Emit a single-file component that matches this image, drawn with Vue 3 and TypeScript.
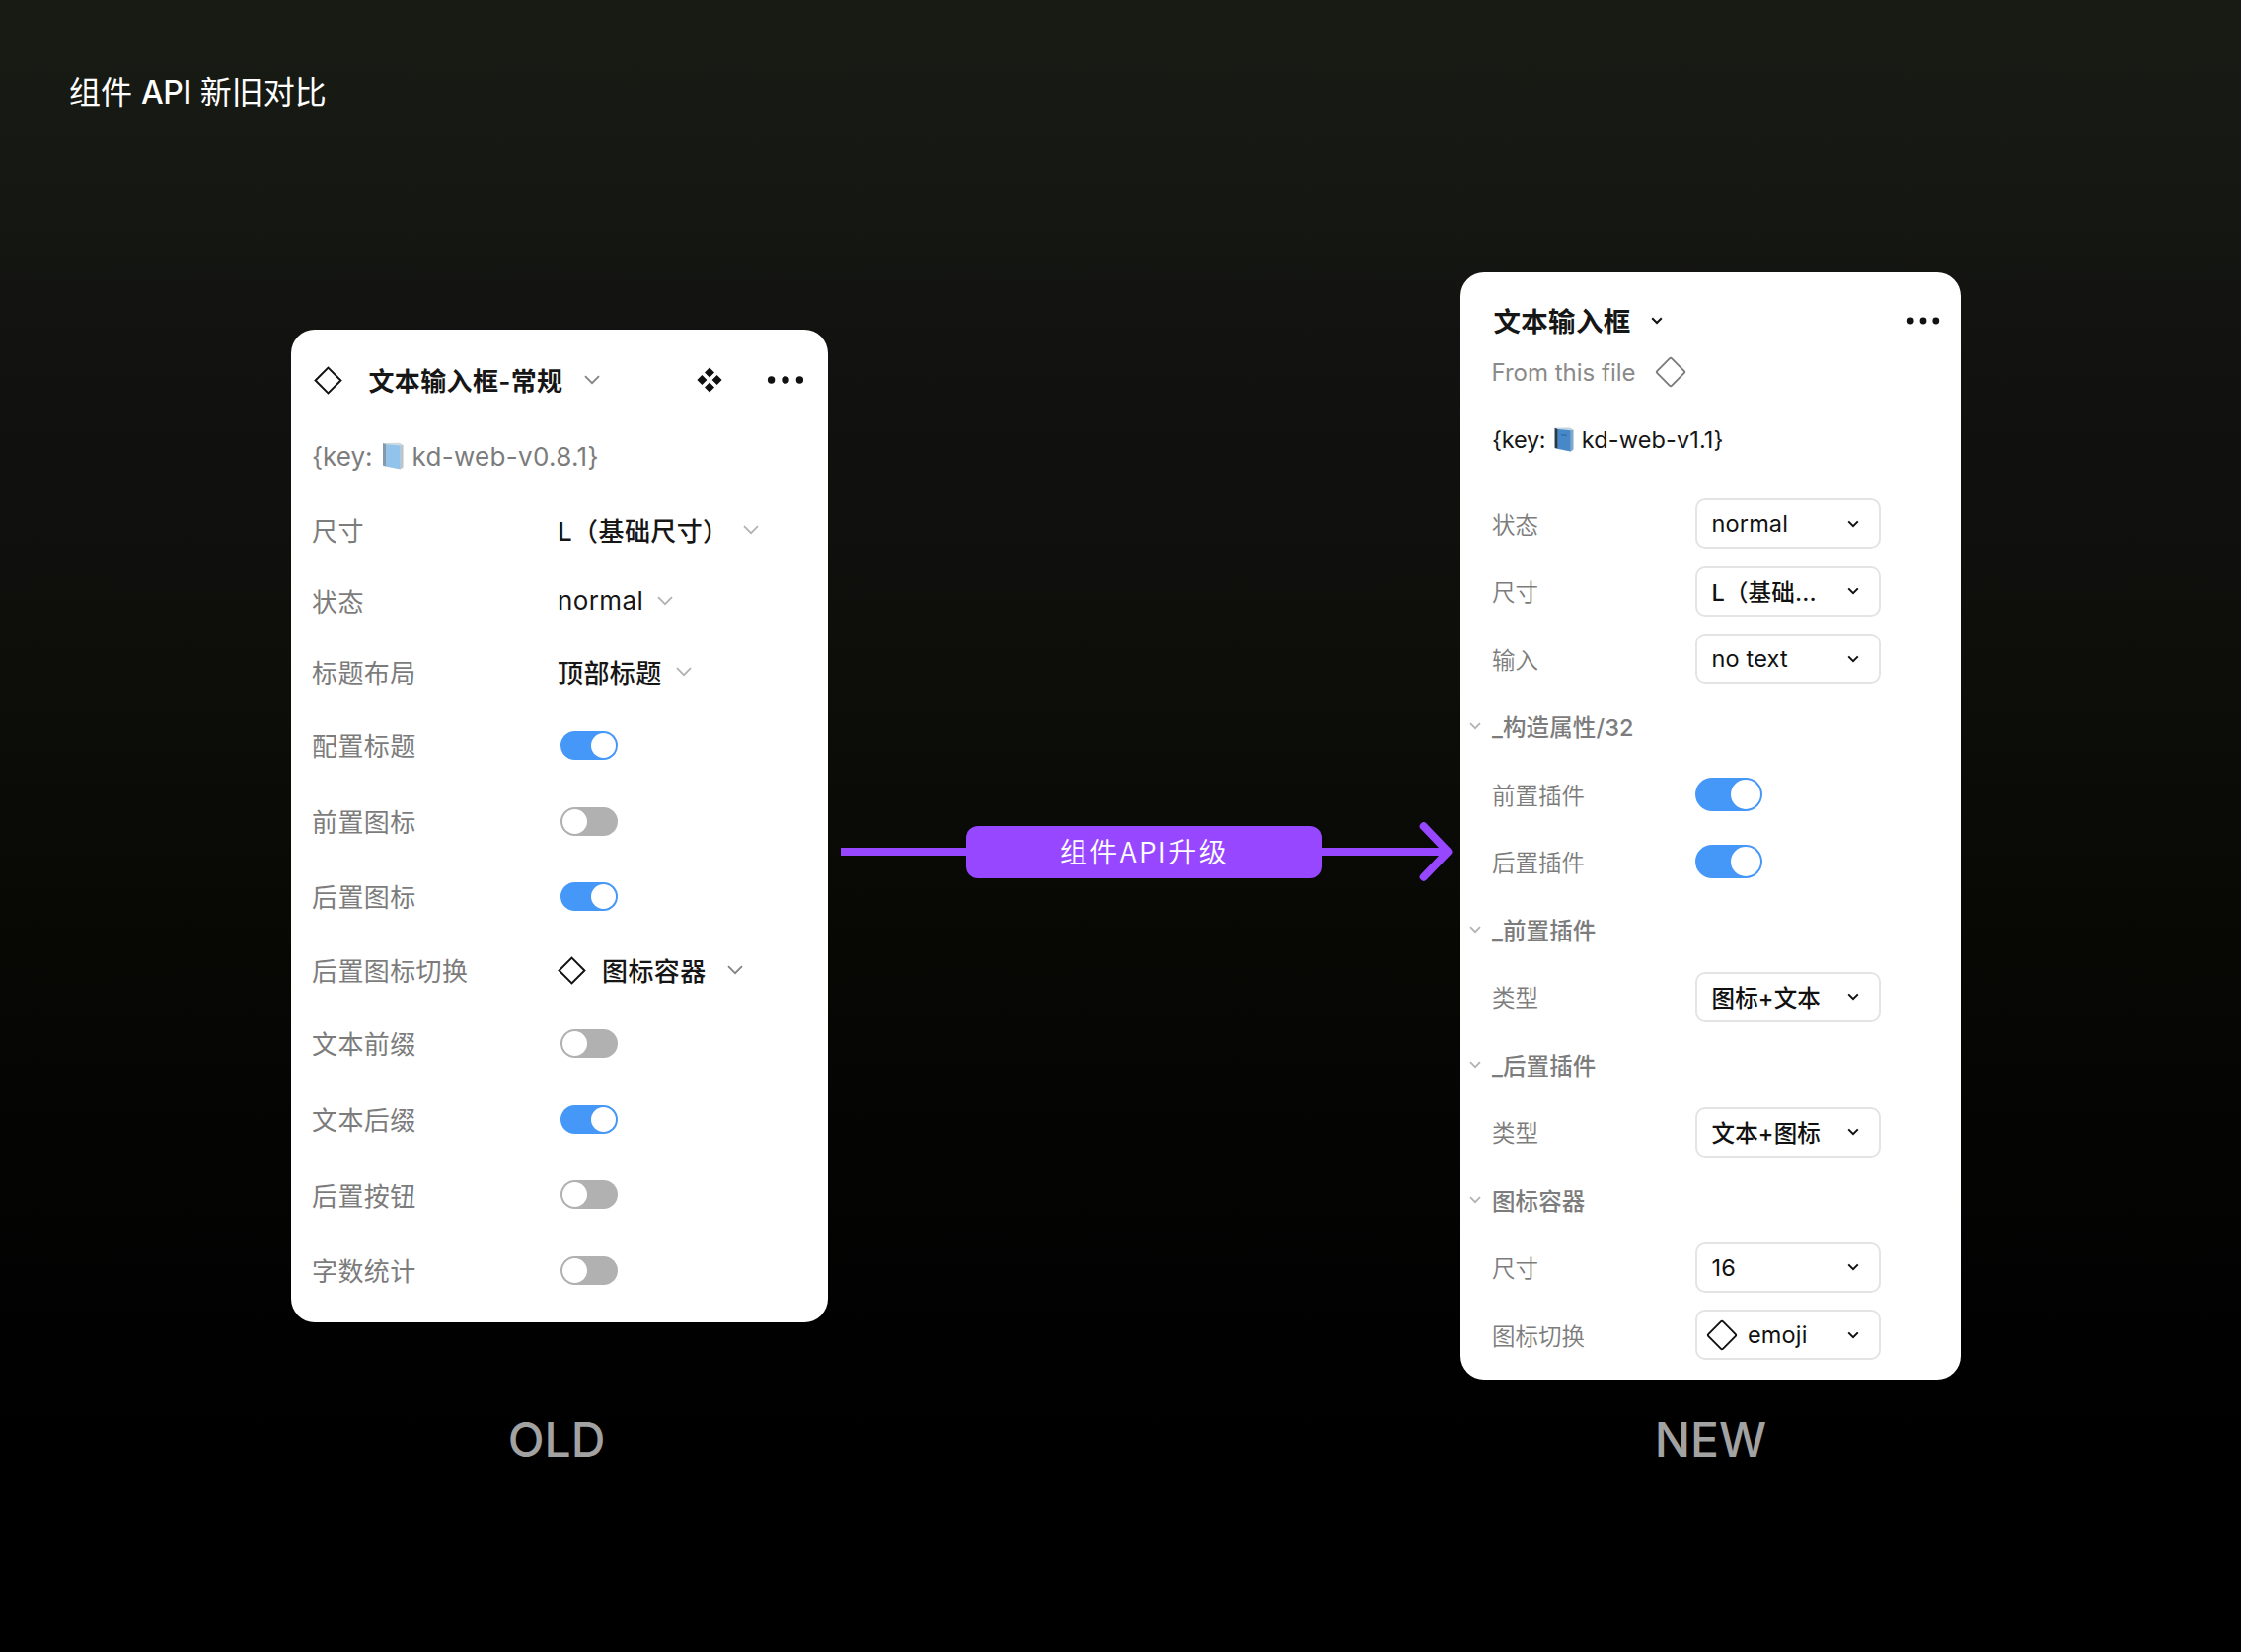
<script setup lang="ts">
type OldRow = {
  label: string
  kind: 'select' | 'switch' | 'icon'
  value?: string
  on?: boolean
}

type NewRow = {
  label: string
  kind: 'select' | 'switch' | 'icon' | 'group'
  value?: string
  on?: boolean
}

const oldRows: OldRow[] = [
  { label: '尺寸', kind: 'select', value: 'L（基础尺寸）' },
  { label: '状态', kind: 'select', value: 'normal' },
  { label: '标题布局', kind: 'select', value: '顶部标题' },
  { label: '配置标题', kind: 'switch', on: true },
  { label: '前置图标', kind: 'switch', on: false },
  { label: '后置图标', kind: 'switch', on: true },
  { label: '后置图标切换', kind: 'icon', value: '图标容器' },
  { label: '文本前缀', kind: 'switch', on: false },
  { label: '文本后缀', kind: 'switch', on: true },
  { label: '后置按钮', kind: 'switch', on: false },
  { label: '字数统计', kind: 'switch', on: false },
]

const newRows: NewRow[] = [
  { label: '状态', kind: 'select', value: 'normal' },
  { label: '尺寸', kind: 'select', value: 'L（基础...' },
  { label: '输入', kind: 'select', value: 'no text' },
  { label: '_构造属性/32', kind: 'group' },
  { label: '前置插件', kind: 'switch', on: true },
  { label: '后置插件', kind: 'switch', on: true },
  { label: '_前置插件', kind: 'group' },
  { label: '类型', kind: 'select', value: '图标+文本' },
  { label: '_后置插件', kind: 'group' },
  { label: '类型', kind: 'select', value: '文本+图标' },
  { label: '图标容器', kind: 'group' },
  { label: '尺寸', kind: 'select', value: '16' },
  { label: '图标切换', kind: 'icon', value: 'emoji' },
]

// Chinese values are set in a medium weight, Latin ones in regular
const isHan = (text = '') => /[\u4e00-\u9fff]/.test(text)
</script>

<template>
  <div class="board">
    <h1 class="title">组件 <span class="latin">API</span> 新旧对比</h1>

    <main class="compare">
      <section class="card old">
        <header class="old-head">
          <svg class="diamond" viewBox="0 0 29 29" width="29" height="29">
            <path d="M14.5 1.6 27.4 14.5 14.5 27.4 1.6 14.5Z" />
          </svg>
          <strong class="old-name">文本输入框-常规</strong>
          <svg class="chev dark" viewBox="0 0 16 10" width="16" height="10"><path d="M1 1.2 8 8.2 15 1.2" /></svg>
          <span class="grow"></span>
          <svg class="component" viewBox="0 0 26 26" width="26" height="26">
            <path d="M13 .4 18 5.4 13 10.4 8 5.4ZM13 15.6 18 20.6 13 25.6 8 20.6ZM5.4 8 10.4 13 5.4 18 .4 13ZM20.6 8 25.6 13 20.6 18 15.6 13Z" />
          </svg>
          <svg class="dots" viewBox="0 0 38 8" width="38" height="8">
            <circle cx="4.6" cy="4" r="3.7" /><circle cx="19" cy="4" r="3.7" /><circle cx="33.4" cy="4" r="3.7" />
          </svg>
        </header>
        <p class="key">
          <span class="brace">{key:</span>
          <svg class="book" viewBox="0 0 22 28" width="22" height="28">
            <path d="M1 1 18 .8 21.4 3V25.6L18.4 27.4 1 24Z" fill="#cfd9e0" />
            <path d="M4 2.2 18.6 3.4V27.2L4 24.4Z" fill="#92c3ea" />
            <path d="M1 1 4 2.2V24.4L1 23.4Z" fill="#8699a8" />
            <path d="M18.6 3.4 21.4 2.8V25.6L18.6 27.2Z" fill="#bac6ce" />
          </svg>
          <span>kd-web-v0.8.1}</span>
        </p>
        <div v-for="row in oldRows" :key="row.label" class="old-row" :class="`row-${row.kind}`">
          <span class="label">{{ row.label }}</span>
          <span v-if="row.kind === 'switch'" class="switch" :class="{ on: row.on }"><i></i></span>
          <template v-else>
            <svg v-if="row.kind === 'icon'" class="diamond" viewBox="0 0 29 29" width="29" height="29">
              <path d="M14.5 1.6 27.4 14.5 14.5 27.4 1.6 14.5Z" />
            </svg>
            <span class="value" :class="{ han: isHan(row.value) }">{{ row.value }}</span>
            <svg class="chev" :class="{ dark: row.kind === 'icon' }" viewBox="0 0 16 10" width="16" height="10">
              <path d="M1 1.2 8 8.2 15 1.2" />
            </svg>
          </template>
        </div>
      </section>

      <div class="upgrade">
        <span class="line start"></span>
        <span class="pill">组件API升级</span>
        <span class="line end"></span>
        <svg class="head" viewBox="0 0 34 60" width="34" height="60"><path d="M4.7 4.3 29.4 30 4.7 55.7" /></svg>
      </div>

      <section class="card new">
        <header class="new-head">
          <strong class="new-name">文本输入框</strong>
          <svg class="chev black" viewBox="0 0 12 8" width="12" height="8"><path d="M1.2 1.2 6 6 10.8 1.2" /></svg>
          <span class="grow"></span>
          <svg class="dots" viewBox="0 0 34 8" width="34" height="8">
            <circle cx="4.2" cy="4" r="3.4" /><circle cx="17" cy="4" r="3.4" /><circle cx="29.8" cy="4" r="3.4" />
          </svg>
        </header>
        <p class="from">
          <span>From this file</span>
          <svg class="soft" viewBox="0 0 32 32" width="32" height="32">
            <path d="M14.8 2.4Q16 1.2 17.2 2.4L29.6 14.8Q30.8 16 29.6 17.2L17.2 29.6Q16 30.8 14.8 29.6L2.4 17.2Q1.2 16 2.4 14.8Z" />
          </svg>
        </p>
        <p class="key">
          <span class="brace">{key:</span>
          <svg class="book" viewBox="0 0 20 25" width="20" height="25">
            <path d="M.6 .8 16 .6 19.4 2.8V22.6L16.6 24.6 .6 21.4Z" fill="#c3d3df" />
            <path d="M3.6 2 16.8 3.2V24.4L3.6 21.8Z" fill="#4788c8" />
            <path d="M.6 .8 3.6 2V21.8L.6 20.8Z" fill="#263a4d" />
            <path d="M16.8 3.2 19.4 2.6V22.6L16.8 24.4Z" fill="#80a9cd" />
            <path d="M7 7 12.8 7.6V9.2L7 8.6Z" fill="#356fae" />
          </svg>
          <span>kd-web-v1.1}</span>
        </p>
        <div v-for="(row, i) in newRows" :key="i" class="new-row">
          <template v-if="row.kind === 'group'">
            <svg class="chev group-chev" viewBox="0 0 12 8" width="12" height="8"><path d="M1 1.2 6 6.2 11 1.2" /></svg>
            <span class="group-name">{{ row.label }}</span>
          </template>
          <template v-else>
            <span class="label">{{ row.label }}</span>
            <span v-if="row.kind === 'switch'" class="switch" :class="{ on: row.on }"><i></i></span>
            <span v-else class="select" :class="{ 'with-icon': row.kind === 'icon' }">
              <svg v-if="row.kind === 'icon'" class="soft" viewBox="0 0 32 32" width="32" height="32">
                <path d="M14.8 2.4Q16 1.2 17.2 2.4L29.6 14.8Q30.8 16 29.6 17.2L17.2 29.6Q16 30.8 14.8 29.6L2.4 17.2Q1.2 16 2.4 14.8Z" />
              </svg>
              <span class="value" :class="{ han: isHan(row.value) }">{{ row.value }}</span>
              <svg class="chev black" viewBox="0 0 12 8" width="12" height="8"><path d="M1.2 1.4 6 6.2 10.8 1.4" /></svg>
            </span>
          </template>
        </div>
      </section>
    </main>

    <footer class="captions">
      <span class="caption cap-old">OLD</span>
      <span class="caption cap-new">NEW</span>
    </footer>
  </div>
</template>

<style>
body {
  background: #000;
}
</style>

<style scoped>
.board {
  box-sizing: border-box;
  width: 2271px;
  height: 1674px;
  overflow: hidden;
  display: flex;
  flex-direction: column;
  background: linear-gradient(#181a14 0, #161813 180px, #121310 340px, #0e0e0b 640px, #070704 970px, #020202 1310px, #000 1450px);
  font-family: Inter, 'Noto Sans CJK SC', sans-serif;
  color: #161616;
}
.title {
  margin: 70px 0 0 70px;
  height: 48px;
  line-height: 48px;
  font-size: 32px;
  font-weight: 400;
  color: #fff;
}
.latin {
  font-weight: 500;
  letter-spacing: -0.4px;
}
.compare {
  display: flex;
  align-items: flex-start;
  margin: 158px 0 0 295px;
  height: 1122px;
}
.card {
  box-sizing: border-box;
  background: #fff;
  border-radius: 24px;
  white-space: nowrap;
}
svg {
  display: block;
  flex: none;
  fill: none;
}
p {
  margin: 0;
}
.grow {
  flex: 1;
}
.label {
  flex: none;
  color: #7c7c7c;
}
.value.han {
  font-weight: 500;
}
.chev {
  stroke: #b3b3b3;
  stroke-width: 1.8;
}
.chev.dark {
  stroke: #838383;
}
.chev.black {
  stroke: #111;
  stroke-width: 2;
}
.dots,
.component {
  fill: #111;
}
.diamond {
  stroke: #111;
  stroke-width: 2;
}
.soft {
  stroke: #111;
  stroke-width: 1.9;
}
.switch {
  box-sizing: border-box;
  display: flex;
  flex: none;
  padding: 2px;
  background: #b1b1b1;
  border-radius: 99px;
}
.switch i {
  height: 100%;
  aspect-ratio: 1;
  border-radius: 50%;
  background: #fff;
}
.switch.on {
  justify-content: flex-end;
  background: #4597f8;
}

.old {
  width: 544px;
  height: 1006px;
  margin-top: 58px;
  padding-top: 13px;
  font-size: 26px;
  letter-spacing: 0.4px;
}
.old-head {
  display: flex;
  align-items: center;
  height: 76px;
  padding: 0 24px 0 23px;
}
.old-name {
  margin: 0 22px 0 26.5px;
  padding-bottom: 2px;
  font-weight: 600;
  letter-spacing: 0.35px;
}
.old-head .dots {
  margin-left: 45px;
}
.old .key {
  display: flex;
  align-items: center;
  height: 78px;
  padding-left: 21px;
  letter-spacing: 0.3px;
  color: #7c7c7c;
}
.old .brace {
  letter-spacing: 0;
}
.old .book {
  margin: 0 9px;
}
.old-row {
  display: flex;
  align-items: center;
  height: 72px;
  padding-left: 21px;
}
.row-switch {
  height: 76.7px;
}
.old-row .label {
  width: 249px;
  padding-bottom: 1.5px;
}
.old-row .value {
  padding-bottom: 1px;
}
.old-row .chev {
  margin-left: 14px;
}
.row-icon .chev {
  margin-left: 21px;
}
.old-row .diamond {
  margin-right: 16px;
}
.old-row .switch {
  width: 58px;
  height: 29px;
  margin-left: 3px;
}

.upgrade {
  display: flex;
  align-items: center;
  width: 620px;
  height: 60px;
  margin: 557px 8px 0 13px;
}
.line {
  height: 8px;
  background: #9747ff;
}
.line.start {
  width: 127px;
}
.line.end {
  width: 127px;
  margin-right: -29px;
}
.pill {
  width: 361px;
  height: 53px;
  border-radius: 12px;
  background: #9747ff;
  color: #fff;
  font-family: 'Noto Sans CJK SC', sans-serif;
  font-size: 28px;
  font-weight: 350;
  line-height: 51px;
  letter-spacing: 2.4px;
  text-align: center;
}
.head {
  stroke: #9747ff;
  stroke-width: 8;
  stroke-linecap: round;
  stroke-linejoin: round;
}

.new {
  width: 507px;
  height: 1122px;
  padding-top: 21px;
  font-size: 23.5px;
}
.new-head {
  display: flex;
  align-items: center;
  height: 56px;
  padding: 0 21px 0 33.5px;
}
.new-name {
  margin-right: 20px;
  padding-bottom: 2px;
  font-size: 27.5px;
  font-weight: 600;
  letter-spacing: 0.3px;
}
.from {
  display: flex;
  align-items: center;
  height: 48px;
  padding-left: 31.5px;
  font-size: 24px;
  color: #8a8a8a;
}
.from .soft {
  margin-left: 19px;
  stroke: #7c7c7c;
}
.new .key {
  display: flex;
  align-items: center;
  height: 89px;
  margin-bottom: 6.5px;
  padding-left: 32px;
  letter-spacing: 0.12px;
}
.new .brace {
  letter-spacing: -0.25px;
}
.new .book {
  margin: 0 8px 0 8.5px;
}
.new-row {
  display: flex;
  align-items: center;
  height: 68.5px;
  padding-left: 32px;
}
.new-row .label {
  width: 205.5px;
  font-weight: 350;
}
.group-chev {
  margin: 0 11px 0 -23px;
}
.group-name {
  font-weight: 500;
  letter-spacing: 0.1px;
  color: #7c7c7c;
}
.select {
  box-sizing: border-box;
  display: flex;
  align-items: center;
  justify-content: space-between;
  width: 188px;
  height: 51px;
  padding: 0 20px 0 15px;
  border: 2px solid #e4e4e4;
  border-radius: 10px;
  letter-spacing: 0.15px;
  color: #111;
}
.select.with-icon {
  padding-left: 9.5px;
}
.select.with-icon .value {
  flex: 1;
  margin-left: 10px;
}
.new-row .switch {
  width: 68px;
  height: 34px;
}

.captions {
  display: flex;
  margin: 31px 0 0 295px;
  height: 60px;
}
.caption {
  font-size: 48px;
  font-weight: 500;
  line-height: 60px;
  color: #a2a2a2;
  text-align: center;
}
.cap-old {
  width: 538px;
}
.cap-new {
  width: 507px;
  margin-left: 647px;
}
</style>
